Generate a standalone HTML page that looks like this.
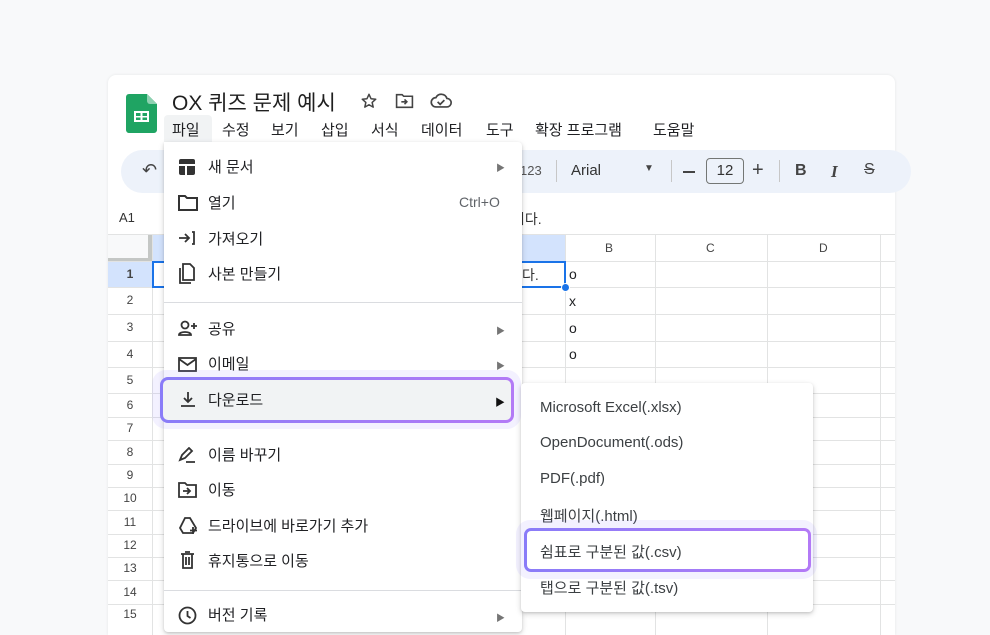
<!DOCTYPE html>
<html><head><meta charset="utf-8"><style>
*{box-sizing:border-box;margin:0;padding:0}
body{width:990px;height:617px;overflow:hidden;background:#f8f9fa;font-family:"Liberation Sans","Noto Sans CJK KR",sans-serif;color:#202124;position:relative}
.abs{position:absolute}
.win{position:absolute;left:108px;top:75px;width:787px;height:560px;background:#fff;border-radius:8px 8px 0 0;box-shadow:0 0 3px rgba(0,0,0,.08);overflow:hidden}
.t{position:absolute;white-space:nowrap}
.mb{font-size:15px;top:119px;color:#202124}
.hl{background:#f1f3f4}
.rn{position:absolute;left:108px;width:44px;text-align:center;font-size:12px;color:#444;border-bottom:1px solid #e2e2e2}
.hline{position:absolute;left:108px;width:787px;height:1px;background:#e2e3e3}
.vline{position:absolute;top:235px;width:1px;height:400px;background:#e2e3e3}
.menu{position:absolute;background:#fff;border-radius:4px;box-shadow:0 2px 6px rgba(0,0,0,.18),0 1px 2px rgba(0,0,0,.1)}
.mi{position:absolute;left:208px;font-size:15px;color:#202124;white-space:nowrap}
.ic{position:absolute;left:178px}
.arr{position:absolute;left:496px;font-size:9px;color:#757575}
.sep{position:absolute;left:164px;width:358px;height:1px;background:#dadce0}
.si{position:absolute;left:540px;font-size:15px;color:#3c4043;white-space:nowrap}
</style></head><body>
<div class="win"></div>
<svg class="abs" style="left:126px;top:94px" width="31" height="39" viewBox="0 0 31 39"><path d="M3 0h18l10 10v26a3 3 0 0 1-3 3H3a3 3 0 0 1-3-3V3a3 3 0 0 1 3-3z" fill="#1fa463"/><path d="M21 0l10 10H24a3 3 0 0 1-3-3z" fill="#8ed1b1"/><rect x="8" y="17" width="15" height="11" fill="#fff"/><rect x="10" y="19" width="4.5" height="3" fill="#1fa463"/><rect x="16.5" y="19" width="4.5" height="3" fill="#1fa463"/><rect x="10" y="23.5" width="4.5" height="2.5" fill="#1fa463"/><rect x="16.5" y="23.5" width="4.5" height="2.5" fill="#1fa463"/></svg>
<div class="t" style="left:172px;top:87px;font-size:21px;color:#1f1f1f">OX 퀴즈 문제 예시</div>
<svg class="abs" style="left:360px;top:92px" width="18" height="18" viewBox="0 0 24 24"><path d="M12 3l2.7 6 6.3.6-4.8 4.3 1.4 6.3L12 17l-5.6 3.2 1.4-6.3L3 9.6 9.3 9z" fill="none" stroke="#444" stroke-width="2" stroke-linejoin="round"/></svg>
<svg class="abs" style="left:395px;top:93px" width="19" height="16" viewBox="0 0 24 20"><path d="M2 2h7l2 2h11v14H2z" fill="none" stroke="#444" stroke-width="2"/><path d="M8 11h7M12 8l3 3-3 3" fill="none" stroke="#444" stroke-width="2"/></svg>
<svg class="abs" style="left:430px;top:93px" width="22" height="16" viewBox="0 0 26 18"><path d="M7 16h13a5 5 0 0 0 0-10 7 7 0 0 0-13-1 5.5 5.5 0 0 0 0 11z" fill="none" stroke="#444" stroke-width="2"/><path d="M9 10l3 3 5-5" fill="none" stroke="#444" stroke-width="2"/></svg>
<div class="abs hl" style="left:164px;top:115px;width:48px;height:28px;border-radius:4px 4px 0 0"></div>
<div class="t mb" style="left:172px">파일</div>
<div class="t mb" style="left:222px">수정</div>
<div class="t mb" style="left:271px">보기</div>
<div class="t mb" style="left:321px">삽입</div>
<div class="t mb" style="left:371px">서식</div>
<div class="t mb" style="left:421px">데이터</div>
<div class="t mb" style="left:486px">도구</div>
<div class="t mb" style="left:535px">확장 프로그램</div>
<div class="t mb" style="left:653px">도움말</div>
<div class="abs" style="left:121px;top:150px;width:790px;height:43px;background:#edf2fa;border-radius:22px"></div>
<div class="t" style="left:142px;top:160px;font-size:18px;color:#444">↶</div>
<div class="t" style="left:520px;top:163px;font-size:13px;color:#555">123</div>
<div class="abs" style="left:556px;top:160px;width:1px;height:22px;background:#c7c7c7"></div>
<div class="t" style="left:571px;top:162px;font-size:15px;color:#333">Arial</div>
<div class="t" style="left:644px;top:163px;font-size:10px;color:#444">▼</div>
<div class="abs" style="left:671px;top:160px;width:1px;height:22px;background:#c7c7c7"></div>
<div class="abs" style="left:683px;top:171px;width:12px;height:2px;background:#444"></div>
<div class="abs" style="left:706px;top:158px;width:38px;height:26px;border:1px solid #747775;border-radius:4px;font-size:15px;text-align:center;line-height:24px;color:#333">12</div>
<div class="t" style="left:752px;top:159px;font-size:20px;color:#444">+</div>
<div class="abs" style="left:779px;top:160px;width:1px;height:22px;background:#c7c7c7"></div>
<div class="t" style="left:795px;top:162px;font-size:16px;font-weight:bold;color:#444">B</div>
<div class="t" style="left:831px;top:162px;font-size:17px;font-style:italic;font-family:'Liberation Serif',serif;font-weight:bold;color:#444">I</div>
<div class="t" style="left:864px;top:161px;font-size:16px;color:#444;text-decoration:line-through">S</div>
<div class="t" style="left:119px;top:210px;font-size:13px;color:#333">A1</div>
<div class="t" style="left:512px;top:209px;font-size:14px;color:#333">이다.</div>
<div class="hline" style="top:234px"></div>
<div class="abs" style="left:108px;top:235px;width:44px;height:26px;background:#f8f9fa"></div>
<div class="abs" style="left:148px;top:235px;width:5px;height:26px;background:#c4c7c5"></div>
<div class="abs" style="left:152px;top:235px;width:413px;height:26px;background:#d3e3fd"></div>
<div class="abs" style="left:108px;top:258px;width:44px;height:4px;background:#c4c7c5"></div>
<div class="t" style="left:605px;top:241px;font-size:12px;color:#444">B</div>
<div class="t" style="left:706px;top:241px;font-size:12px;color:#444">C</div>
<div class="t" style="left:819px;top:241px;font-size:12px;color:#444">D</div>
<div class="vline" style="left:565px"></div><div class="vline" style="left:655px"></div><div class="vline" style="left:767px"></div><div class="vline" style="left:880px"></div><div class="vline" style="left:152px"></div>
<div class="hline" style="top:261px"></div><div class="hline" style="top:287px"></div><div class="hline" style="top:314px"></div><div class="hline" style="top:341px"></div><div class="hline" style="top:367px"></div><div class="hline" style="top:393px"></div><div class="hline" style="top:417px"></div><div class="hline" style="top:440px"></div><div class="hline" style="top:464px"></div><div class="hline" style="top:487px"></div><div class="hline" style="top:510px"></div><div class="hline" style="top:534px"></div><div class="hline" style="top:557px"></div><div class="hline" style="top:580px"></div><div class="hline" style="top:604px"></div>
<div class="abs" style="left:108px;top:262px;width:44px;height:25px;background:#d3e3fd"></div>
<div class="rn" style="top:267px;font-weight:bold;border:0">1</div>
<div class="rn" style="top:293px;border:0">2</div><div class="rn" style="top:320px;border:0">3</div><div class="rn" style="top:347px;border:0">4</div><div class="rn" style="top:373px;border:0">5</div><div class="rn" style="top:398px;border:0">6</div><div class="rn" style="top:421px;border:0">7</div><div class="rn" style="top:445px;border:0">8</div><div class="rn" style="top:468px;border:0">9</div><div class="rn" style="top:491px;border:0">10</div><div class="rn" style="top:515px;border:0">11</div><div class="rn" style="top:538px;border:0">12</div><div class="rn" style="top:561px;border:0">13</div><div class="rn" style="top:585px;border:0">14</div><div class="rn" style="top:607px;border:0">15</div>
<div class="abs" style="left:152px;top:261px;width:414px;height:27px;border:2px solid #1a73e8"></div>
<div class="abs" style="left:561px;top:283px;width:9px;height:9px;border-radius:50%;background:#1a73e8;border:1px solid #fff"></div>
<div class="t" style="left:522px;top:265px;font-size:14px;color:#333">다.</div>
<div class="t" style="left:569px;top:266px;font-size:14px">o</div>
<div class="t" style="left:569px;top:293px;font-size:14px">x</div>
<div class="t" style="left:569px;top:320px;font-size:14px">o</div>
<div class="t" style="left:569px;top:346px;font-size:14px">o</div>
<div class="menu" style="left:164px;top:142px;width:358px;height:490px;border-radius:0 4px 4px 4px"></div>
<svg class="ic" style="top:158px" width="18" height="18" viewBox="0 0 18 18"><rect x="1" y="1" width="16" height="16" rx="2" fill="#333"/><path d="M1 7h16M8 7v10" stroke="#fff" stroke-width="2"/></svg>
<div class="mi" style="top:156px">새 문서</div><div class="arr" style="top:161px">▶</div>
<svg class="ic" style="top:195px" width="20" height="16" viewBox="0 0 20 16"><path d="M1 1h6l2 2h10v12H1z" fill="none" stroke="#333" stroke-width="2"/></svg>
<div class="mi" style="top:192px">열기</div><div class="t" style="left:459px;top:194px;font-size:14px;color:#5f6368">Ctrl+O</div>
<svg class="ic" style="top:231px" width="18" height="14" viewBox="0 0 18 14"><path d="M1 7h9M7 3l4 4-4 4M14 1h2v12h-2" fill="none" stroke="#333" stroke-width="1.8"/></svg>
<div class="mi" style="top:228px">가져오기</div>
<svg class="ic" style="top:263px" width="18" height="21" viewBox="0 0 18 21"><path d="M5 1h7l4 4v12H5z M2 5v15h11" fill="none" stroke="#333" stroke-width="1.8"/></svg>
<div class="mi" style="top:263px">사본 만들기</div>
<div class="sep" style="top:302px"></div>
<svg class="ic" style="top:320px" width="20" height="16" viewBox="0 0 20 16"><circle cx="7" cy="5" r="3.5" fill="none" stroke="#333" stroke-width="1.8"/><path d="M1 15c0-4 12-4 12 0z" fill="none" stroke="#333" stroke-width="1.8"/><path d="M16 3v6M13 6h6" stroke="#333" stroke-width="1.8"/></svg>
<div class="mi" style="top:318px">공유</div><div class="arr" style="top:324px">▶</div>
<svg class="ic" style="top:357px" width="19" height="15" viewBox="0 0 19 15"><rect x="1" y="1" width="17" height="13" fill="none" stroke="#333" stroke-width="1.8"/><path d="M1 2l8.5 6L18 2" fill="none" stroke="#333" stroke-width="1.8"/></svg>
<div class="mi" style="top:353px">이메일</div><div class="arr" style="top:359px">▶</div>
<div class="abs" style="left:152px;top:370px;width:369px;height:59px;border-radius:14px;background:rgba(160,140,255,.12)"></div>
<div class="abs" style="left:160px;top:377px;width:354px;height:46px;border-radius:8px;background:linear-gradient(90deg,#8a7cf8,#b37af6);padding:3px"><div style="width:100%;height:100%;background:#f1f3f4;border-radius:5px"></div></div>
<svg class="ic" style="left:180px;top:391px" width="16" height="17" viewBox="0 0 16 17"><path d="M8 1v10M4 7l4 4 4-4M1 15h14" fill="none" stroke="#333" stroke-width="1.8"/></svg>
<div class="mi" style="top:389px">다운로드</div><div class="t" style="left:495px;top:394px;font-size:10px;color:#111">▶</div>
<svg class="ic" style="top:447px" width="18" height="16" viewBox="0 0 18 16"><path d="M2 13l2-5 7-7 3 3-7 7zM8 15h9" fill="none" stroke="#333" stroke-width="1.8"/></svg>
<div class="mi" style="top:444px">이름 바꾸기</div>
<svg class="ic" style="top:482px" width="19" height="16" viewBox="0 0 19 16"><path d="M1 1h6l2 2h9v12H1z" fill="none" stroke="#333" stroke-width="1.8"/><path d="M5 9h7M9 6l3 3-3 3" fill="none" stroke="#333" stroke-width="1.8"/></svg>
<div class="mi" style="top:479px">이동</div>
<svg class="ic" style="top:516px" width="20" height="19" viewBox="0 0 20 19"><path d="M7 2h5l6 10-3 5H5L2 12z" fill="none" stroke="#333" stroke-width="1.8"/><path d="M15 11v7M12 14.5h7" stroke="#333" stroke-width="1.8"/></svg>
<div class="mi" style="top:515px">드라이브에 바로가기 추가</div>
<svg class="ic" style="left:180px;top:551px" width="15" height="18" viewBox="0 0 15 18"><path d="M1 3h13M5 1h5M3 3v14h9V3M6 6v8M9 6v8" fill="none" stroke="#333" stroke-width="1.8"/></svg>
<div class="mi" style="top:550px">휴지통으로 이동</div>
<div class="sep" style="top:590px"></div>
<svg class="ic" style="top:606px" width="19" height="19" viewBox="0 0 19 19"><circle cx="9.5" cy="9.5" r="8" fill="none" stroke="#333" stroke-width="1.8"/><path d="M9.5 5v5l3 2" fill="none" stroke="#333" stroke-width="1.8"/></svg>
<div class="mi" style="top:604px">버전 기록</div><div class="arr" style="top:611px">▶</div>
<div class="menu" style="left:521px;top:383px;width:292px;height:229px"></div>
<div class="si" style="top:399px">Microsoft Excel(.xlsx)</div>
<div class="si" style="top:434px">OpenDocument(.ods)</div>
<div class="si" style="top:470px">PDF(.pdf)</div>
<div class="si" style="top:505px">웹페이지(.html)</div>
<div class="abs" style="left:516px;top:520px;width:301px;height:59px;border-radius:14px;background:rgba(160,140,255,.12)"></div>
<div class="abs" style="left:524px;top:528px;width:287px;height:44px;border-radius:7px;background:linear-gradient(90deg,#8a7cf8,#b37af6);padding:3px"><div style="width:100%;height:100%;background:#fff;border-radius:4px"></div></div>
<div class="si" style="top:541px">쉼표로 구분된 값(.csv)</div>
<div class="si" style="top:577px">탭으로 구분된 값(.tsv)</div>
</body></html>
